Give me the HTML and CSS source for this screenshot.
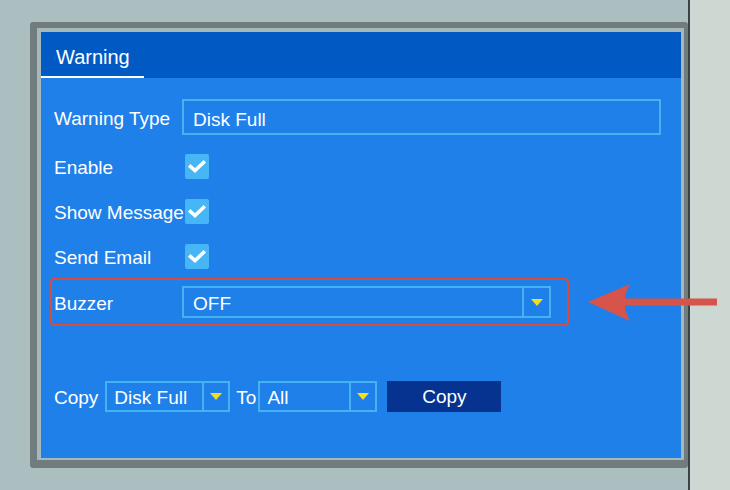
FILE: index.html
```html
<!DOCTYPE html>
<html lang="en">
<head>
    <meta charset="UTF-8">
    <title>Warning</title>
    <link rel="stylesheet" href="styles.css">
</head>
<body>

<div class="desk">
    <div class="frame">
        <div class="panel">
            <div class="tabs">
                <div class="tab">Warning</div>
            </div>

            <div class="form">
                <div class="row row-type">
                    <span class="label">Warning Type</span>
                    <div class="field wide">Disk Full</div>
                </div>

                <div class="row row-check">
                    <span class="label">Enable</span>
                    <span class="check">
                        <svg width="24" height="25" viewBox="0 0 24 25"><path d="M5.5 12.5 L10 16.5 L18.5 8.5" fill="none" stroke="#fff" stroke-width="3.6" stroke-linecap="square"/></svg>
                    </span>
                </div>
                <div class="row row-check">
                    <span class="label">Show Message</span>
                    <span class="check">
                        <svg width="24" height="25" viewBox="0 0 24 25"><path d="M5.5 12.5 L10 16.5 L18.5 8.5" fill="none" stroke="#fff" stroke-width="3.6" stroke-linecap="square"/></svg>
                    </span>
                </div>
                <div class="row row-check">
                    <span class="label">Send Email</span>
                    <span class="check">
                        <svg width="24" height="25" viewBox="0 0 24 25"><path d="M5.5 12.5 L10 16.5 L18.5 8.5" fill="none" stroke="#fff" stroke-width="3.6" stroke-linecap="square"/></svg>
                    </span>
                </div>

                <div class="row row-buzzer">
                    <span class="label">Buzzer</span>
                    <div class="select buzzer-select">
                        <span class="value">OFF</span>
                        <span class="drop"><i class="tri"></i></span>
                    </div>
                </div>

                <div class="row row-copy">
                    <span class="label-inline">Copy</span>
                    <div class="select small from">
                        <span class="value">Disk Full</span>
                        <span class="drop"><i class="tri"></i></span>
                    </div>
                    <span class="label-inline to">To</span>
                    <div class="select small dest">
                        <span class="value">All</span>
                        <span class="drop"><i class="tri"></i></span>
                    </div>
                    <button class="btn">Copy</button>
                </div>
            </div>
        </div>
    </div>

    <!-- pointer to the buzzer setting -->
    <svg class="arrow" width="134" height="40" viewBox="0 0 134 40">
        <path d="M1 19 L43 1 Q37 12 38 15.5 L130 15.5 L130 22.5 L38 22.5 Q37 26 43 38 Z" fill="#d6544a"/>
    </svg>
</div>
<div class="side"></div>

</body>
</html>
```

FILE: styles.css
```css
* {
    margin: 0;
    padding: 0;
    box-sizing: border-box;
    font-family: 'Liberation Sans', Arial, sans-serif;
}

body {
    display: flex;
    width: 730px;
    height: 490px;
    overflow: hidden;
    background-color: #abbfc0;
    color: #fff;
    font-size: 19px;
}

.desk {
    position: relative;
    width: 688px;
    padding: 22px 0 0 30px;
}

.side {
    flex: 1;
    background-color: #cdd8d3;
    border-left: 2px solid #394244;
}

.frame {
    width: 658px;
    height: 446px;
    background-color: #717c7f;
    border-radius: 3px;
    padding: 6px 4px 8px 7px;
}

.panel {
    height: 100%;
    background-color: #1f80ea;
    border-style: solid;
    border-color: #a6b9ba;
    border-width: 4px 3px 2px 4px;
}

.tabs {
    height: 46px;
    background-color: #015ac4;
}

.tab {
    width: 103px;
    height: 46px;
    padding: 14px 0 0 15px;
    font-size: 20px;
    border-bottom: 2px solid #fff;
}

.form {
    padding: 21px 0 0 13px;
}

.row {
    display: flex;
    align-items: center;
}

.label {
    width: 128px;
    padding-top: 3px;
    white-space: nowrap;
}

.field {
    height: 36px;
    border: 2px solid #43b3f1;
    padding: 8px 0 0 9px;
}

.wide {
    width: 479px;
}

.row-check {
    height: 25px;
    margin-top: 19px;
}

.row-check + .row-check {
    margin-top: 20px;
}

.check {
    width: 24px;
    height: 25px;
    margin-left: 3px;
    background-color: #46b6f6;
    border-radius: 2px;
}

.check svg {
    display: block;
}

.row-buzzer {
    width: 519px;
    height: 48px;
    margin: 9px 0 0 -4px;
    padding-left: 2px;
    border: 2px solid #d84c3f;
    border-radius: 4px;
}

.select {
    display: flex;
    height: 32px;
    border: 2px solid #43b3f1;
}

.select .value {
    flex: 1;
    padding: 5px 0 0 9px;
    white-space: nowrap;
}

.select .drop {
    display: flex;
    align-items: center;
    justify-content: center;
    border-left: 2px solid #43b3f1;
}

.tri {
    width: 0;
    height: 0;
    border-left: 6px solid transparent;
    border-right: 6px solid transparent;
    border-top: 7px solid #f4df1d;
}

.buzzer-select {
    width: 369px;
}

.buzzer-select .drop {
    width: 27px;
}

.row-copy {
    height: 31px;
    margin-top: 55px;
}

.label-inline {
    margin-right: 7px;
    padding-top: 2px;
}

.select.small {
    height: 31px;
}

.select.small .value {
    padding: 4px 0 0 7px;
}

.select.small .drop {
    width: 26px;
}

.from {
    width: 125px;
}

.to {
    margin: 0 2px 0 6px;
}

.dest {
    width: 119px;
}

.btn {
    width: 114px;
    height: 31px;
    margin-left: 10px;
    padding-top: 1px;
    background-color: #05338f;
    color: #fff;
    border: none;
    font-size: 19px;
}

.arrow {
    position: absolute;
    left: 587px;
    top: 283px;
}
```
